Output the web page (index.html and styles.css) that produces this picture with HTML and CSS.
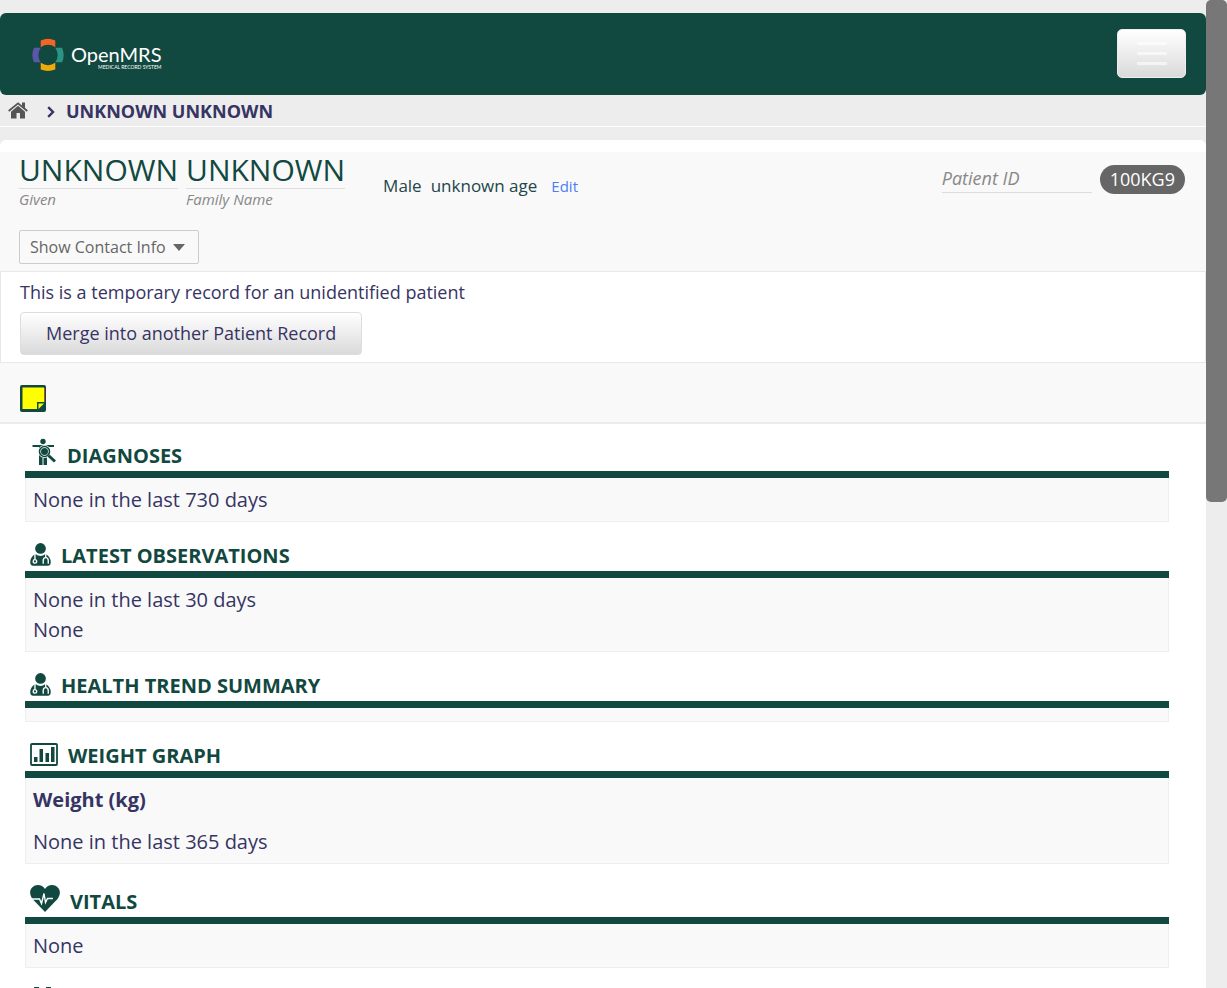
FILE: index.html
```html
<!DOCTYPE html>
<html lang="en">
<head>
<meta charset="utf-8">
<title>OpenMRS - UNKNOWN UNKNOWN</title>
<link rel="stylesheet" href="styles.css">
</head>
<body>
<svg class="defs" aria-hidden="true">
  <symbol id="doctor" viewBox="0 0 20 22">
    <circle cx="10" cy="5.2" r="5.1"/>
    <path d="M5.2 10.500 Q10 14.5 14.8 10.500 Q19.8 13 19.8 18.5 Q19.8 21.8 17 21.8 H3 Q.2 21.8 .2 18.5 Q.2 13 5.2 10.500Z"/>
    <path d="M4.7 10.500v5.5M15 10.500v2.8M12.6 19.8v-3q0-2.8 2.4-2.8t2.4 2.8v3" fill="none" stroke="#fff" stroke-width="1.3"/>
    <circle cx="4.7" cy="17.6" r="1.7" fill="#114840" stroke="#fff" stroke-width="1.3"/>
  </symbol>
</svg>
<div class="window">
  <div class="page">
    <header class="topbar">
      <a class="logo" href="#" aria-label="OpenMRS home">
        <svg class="logo-mark" viewBox="0 0 34 34" aria-hidden="true">
          <path fill="#f26522" d="M9 2Q16.500-1.300 24 2V9Q16.500 4 9 9Z"/>
          <path fill="#eeaa0b" d="M9 32Q16.500 35 24 32V25Q16.500 30 9 25Z"/>
          <path fill="#5b57a6" d="M2 9.500Q-1.300 17 2 24.500H9Q4 17 9 9.500Z"/>
          <path fill="#2b9584" d="M31 9.500Q34.300 17 31 24.500H24Q29 17 24 9.500Z"/>
        </svg>
        <span class="logo-text"><span class="logo-name">OpenMRS</span><span class="logo-sub">MEDICAL RECORD SYSTEM</span></span>
      </a>
      <button class="menu" type="button" aria-label="Toggle navigation"><span></span><span></span><span></span></button>
    </header>
    <nav class="crumbs">
      <a href="#" aria-label="Home"><svg width="20" height="17" viewBox="0 0 20 17" aria-hidden="true"><path fill="#555" d="M10 3.800 17 9.800V16.500H12V11H8.500V16.500H3V9.800Z"/><path fill="none" stroke="#555" stroke-width="1.800" d="M.7 9 10 1.400 19.300 9"/><path fill="#555" d="M14 .5h3v6l-3-2.500z"/></svg></a>
      <svg class="chev" width="8" height="12" viewBox="0 0 8 12" aria-hidden="true"><path d="M1.200 1.200 6 6 1.200 10.800" fill="none" stroke="#363463" stroke-width="2.400"/></svg>
      <span>UNKNOWN UNKNOWN</span>
    </nav>
    <main class="content">
      <section class="patient">
        <div class="identity">
          <h1 class="names">
            <span class="name"><span>UNKNOWN</span><em>Given</em></span>
            <span class="name"><span>UNKNOWN</span><em>Family Name</em></span>
          </h1>
          <div class="demo"><span>Male</span><span>unknown age</span><a href="#">Edit</a></div>
          <div class="ids"><em>Patient ID</em><span class="pill">100KG9</span></div>
        </div>
        <button class="contact" type="button">Show Contact Info <svg width="12" height="7" viewBox="0 0 12 7" aria-hidden="true"><path fill="#666" d="M0 0H12L6 7Z"/></svg></button>
      </section>
      <section class="notice">
        <p>This is a temporary record for an unidentified patient</p>
        <button class="merge" type="button">Merge into another Patient Record</button>
      </section>
      <div class="notes">
        <a href="#" aria-label="Sticky note"><svg width="26" height="27" viewBox="0 0 26 27" aria-hidden="true"><rect width="26" height="27" rx="2" fill="#114840"/><path fill="#ff0" d="M2.500 2.500H24V17H17V24H2.500Z"/><path fill="#ff0" d="M18.500 18.500H24L18.500 24Z"/><path stroke="#b64c2c" d="M24.500 3V17"/></svg></a>
      </div>
      <div class="sections">
        <section class="card">
          <h2><svg width="27" height="28" viewBox="0 0 27 28" aria-hidden="true"><g fill="#114840"><circle cx="13" cy="3.500" r="2.700"/><path d="M2.500 7H24V9H2.500ZM9 8H17V20H9ZM9 18H12.500V27H9ZM13.500 18H17V27H13.500Z"/></g><circle cx="14.500" cy="13.500" r="6.500" fill="#fff"/><circle cx="14.500" cy="13.500" r="5" fill="none" stroke="#114840" stroke-width="1.600"/><circle cx="14.500" cy="13.500" r="3.500" fill="#114840"/><path d="M18.500 17.500 25 23.500" stroke="#114840" stroke-width="3"/></svg>DIAGNOSES</h2>
          <div class="body"><p>None in the last 730 days</p></div>
        </section>
        <section class="card">
          <h2><svg class="icon" width="21" height="23" aria-hidden="true"><use href="#doctor"/></svg>LATEST OBSERVATIONS</h2>
          <div class="body"><p>None in the last 30 days</p><p>None</p></div>
        </section>
        <section class="card">
          <h2><svg class="icon" width="21" height="23" aria-hidden="true"><use href="#doctor"/></svg>HEALTH TREND SUMMARY</h2>
          <div class="body"></div>
        </section>
        <section class="card">
          <h2><svg width="28" height="23" viewBox="0 0 28 23" aria-hidden="true"><rect x="1" y="1" width="26" height="21" rx="1" fill="none" stroke="#114840" stroke-width="1.800"/><path fill="#114840" d="M4 14H7.500V19H4ZM9.500 6H13V19H9.500ZM15.500 10H19V19H15.500ZM21 4H24.500V19H21Z"/></svg>WEIGHT GRAPH</h2>
          <div class="body"><h3>Weight (kg)</h3><p>None in the last 365 days</p></div>
        </section>
        <section class="card">
          <h2 class="tall"><svg width="30" height="27" viewBox="0 0 30 27" aria-hidden="true"><path fill="#114840" d="M15 27 2.500 14C-3 6.500 2 0 8 0Q12.500 0 15 4Q17.500 0 22 0C28 0 33 6.500 27.500 14Z"/><path d="M2 14H9.500L11.500 18.500 14 8.500 15.500 17.500 17.500 13.500H23" fill="none" stroke="#fff" stroke-width="1.400"/></svg>VITALS</h2>
          <div class="body"><p>None</p></div>
        </section>
        <section class="card">
          <h2 class="tall"><svg width="26" height="29" viewBox="0 0 26 29" aria-hidden="true"><path fill="#114840" d="M4 0H9V4H16V0H21V4H24V29H1V4H4Z"/></svg></h2>
        </section>
      </div>
    </main>
  </div>
  <div class="scrollbar" aria-hidden="true"><div class="thumb"></div></div>
</div>
</body>
</html>
```

FILE: styles.css
```css
* { box-sizing: border-box; }
body {
  margin: 0;
  background: #ededed;
  color: #363463;
  font-family: "Open Sans", sans-serif;
  font-weight: 400;
  font-size: 17px;
  overflow: hidden;
}
h1, h2, h3, p { margin: 0; }
a { text-decoration: none; }
button { font-family: inherit; }
.defs { position: absolute; width: 0; height: 0; }
.window { display: grid; grid-template-columns: 1fr 21px; height: 100vh; overflow: hidden; }
.page { padding-top: 13px; min-width: 0; }
.thumb { height: 50.8vh; background: #777; border-radius: 5px; }

.topbar {
  display: flex;
  align-items: flex-start;
  justify-content: space-between;
  height: 82px;
  padding: 16px 20px 0 32px;
  background: #114840;
  border-radius: 6px;
}
.logo { display: flex; align-items: center; gap: 6px; margin-top: 9px; color: #fff; }
.logo-mark { width: 33px; height: 34px; }
.logo-text { display: flex; flex-direction: column; padding-top: 4px; }
.logo-name { font: 400 20px/20px Lato, sans-serif; }
.logo-sub { font: 400 5px/6px Lato, sans-serif; align-self: flex-end; }
.menu {
  display: flex;
  flex-direction: column;
  align-items: center;
  justify-content: center;
  gap: 7px;
  width: 69px;
  height: 49px;
  border: 1px solid #eee;
  border-radius: 5px;
  background: linear-gradient(#fff, #dadada);
}
.menu span { width: 30px; height: 3px; border-radius: 1px; background: rgba(255, 255, 255, .6); }

.crumbs {
  display: flex;
  align-items: center;
  height: 32px;
  padding-left: 8px;
  border-bottom: 1px solid #fff;
  font-size: 18px;
  font-weight: 700;
}
.crumbs a { display: flex; }
.chev { margin: 3px 11px 0 19px; }

.content { margin-top: 13px; padding-top: 12px; background: #fff; border-radius: 6px 6px 0 0; }
.patient { height: 119px; padding: 0 21px 0 19px; background: #f9f9f9; }
.identity { display: flex; height: 78px; }
.names { display: flex; gap: 8px; font-weight: 400; color: #114840; }
.name { display: flex; flex-direction: column; }
.name span { height: 37px; border-bottom: 1px solid #ddd; font-size: 30px; line-height: 36px; }
.name em { font-size: 15px; line-height: 20px; color: #888; }
.demo { display: flex; gap: 9px; margin-left: 38px; color: #24454b; font-size: 17px; line-height: 24px; padding-top: 22px; }
.demo a { margin-left: 5px; color: #4d7cf7; font-size: 15px; line-height: 25px; }
.ids { display: flex; align-items: flex-start; gap: 8px; margin-left: auto; padding-top: 13px; font-size: 18px; }
.ids em { width: 150px; height: 28px; border-bottom: 1px solid #ddd; color: #888; line-height: 26px; }
.pill { height: 29px; padding: 0 10px; border-radius: 15px; background: #666; color: #fff; line-height: 28px; }
.contact {
  display: inline-flex;
  align-items: center;
  gap: 7px;
  height: 34px;
  padding: 0 13px 0 10px;
  border: 1px solid #ccc;
  border-radius: 2px;
  background: #f9f9f9;
  color: #666;
  font-size: 16px;
}
.notice { height: 92px; padding: 8px 19px; border: 1px solid #e8e8e8; font-size: 18px; }
.notice p { line-height: 24px; }
.merge {
  height: 43px;
  margin-top: 8px;
  padding: 0 25px 2px;
  border: 1px solid #ddd;
  border-radius: 4px;
  background: linear-gradient(#fff, #dadada);
  color: #363463;
  font-size: 18px;
}
.notes { height: 61px; padding: 22px 20px; background: #f9f9f9; border-bottom: 2px solid #ececec; }
.notes a { display: flex; }

.sections { padding: 0 37px 0 25px; }
.card h2 {
  display: flex;
  align-items: flex-end;
  gap: 10px;
  height: 54px;
  padding: 0 5px 5px;
  border-bottom: 7px solid #114840;
  color: #114840;
  font-size: 20px;
  font-weight: 700;
  line-height: 20px;
}
.card + .card h2 { height: 56px; }
.card + .card h2.tall { height: 60px; }
.icon { fill: #114840; }
.body { padding: 7px 7px 6px; border: 1px solid #eee; border-top: 0; background: #f9f9f9; font-size: 20px; line-height: 30px; }
.body h3 { margin-bottom: 12px; font-size: 20px; font-weight: 700; }
```
